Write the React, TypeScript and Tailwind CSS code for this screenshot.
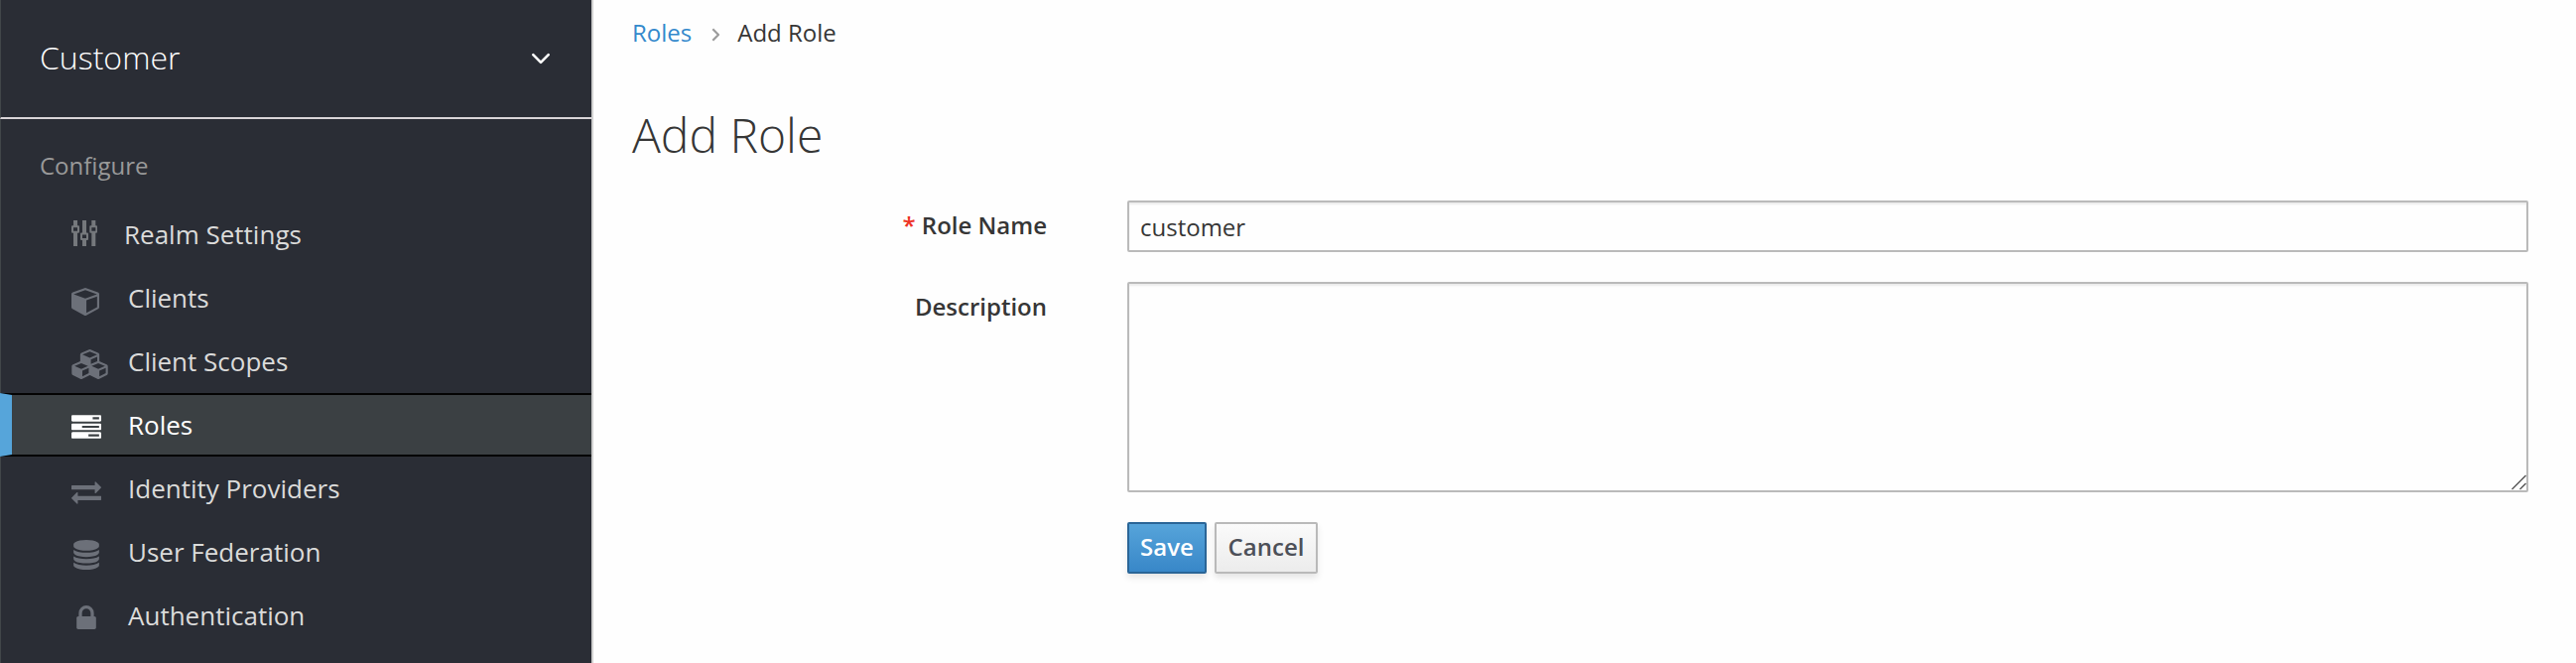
import React from "react";

type IconProps = { box: string; d: string; className: string };

function Glyph({ box, d, className }: IconProps) {
  return (
    <svg viewBox={box} className={className} fill="currentColor" aria-hidden="true">
      <path d={d} fillRule="nonzero" />
    </svg>
  );
}

function SlidersIcon() {
  return (
    <svg viewBox="0 0 26 26" className="mt-[18px] h-[26px] w-[26px] text-[#75787c]" fill="currentColor" aria-hidden="true">
      <path
        fillRule="evenodd"
        d="M2 0h4v5.300h1a1 1 0 0 1 1 1v5.400a1 1 0 0 1-1 1H6V26H2V12.700H1a1 1 0 0 1-1-1V6.300a1 1 0 0 1 1-1h1zM2 7.300v3.400h4V7.300z"
      />
      <path
        fillRule="evenodd"
        d="M11 0h4v12.500h1a1 1 0 0 1 1 1v5.400a1 1 0 0 1-1 1h-1V26h-4v-6.100h-1a1 1 0 0 1-1-1v-5.400a1 1 0 0 1 1-1h1zM11 14.500v3.400h4v-3.400z"
      />
      <path
        fillRule="evenodd"
        d="M20.300 0h4v5.300h.7a1 1 0 0 1 1 1v5.400a1 1 0 0 1-1 1h-.7V26h-4V12.700h-1a1 1 0 0 1-1-1V6.300a1 1 0 0 1 1-1h1zM20.300 7.300v3.400h4V7.300z"
      />
    </svg>
  );
}

const cube =
  "M896 1629l640-349v-636l-640 233v752zm-64-865l698-254-698-254-698 254zm832-252v768q0 35-18 65t-49 47l-704 384q-28 16-61 16t-61-16l-704-384q-31-17-49-47t-18-65v-768q0-40 23-73t61-47l704-256q22-8 44-8t44 8l704 256q38 14 61 47t23 73z";
const cubes =
  "M640 1632l384-192v-314l-384 164v342zm-64-454l404-173-404-173-404 173zm1088 454l384-192v-314l-384 164v342zm-64-454l404-173-404-173-404 173zm-448-293l384-165v-266l-384 164v267zm-64-379l441-189-441-189-441 189zm1088 518v416q0 36-19 67t-52 47l-448 224q-25 14-57 14t-57-14l-448-224q-4-2-7-4-2 2-7 4l-448 224q-25 14-57 14t-57-14l-448-224q-33-16-52-47t-19-67v-416q0-38 21.500-70t56.500-48l434-186v-400q0-38 21.500-70t56.500-48l448-192q23-10 50-10t50 10l448 192q35 16 56.500 48t21.500 70v400l434 186q36 16 57 48t21 70z";
const tasks =
  "M1024 1408h640v-128h-640v128zm-384-512h1024v-128h-1024v128zm640-512h384v-128h-384v128zm512 832v256q0 26-19 45t-45 19h-1664q-26 0-45-19t-19-45v-256q0-26 19-45t45-19h1664q26 0 45 19t19 45zm0-512v256q0 26-19 45t-45 19h-1664q-26 0-45-19t-19-45v-256q0-26 19-45t45-19h1664q26 0 45 19t19 45zm0-512v256q0 26-19 45t-45 19h-1664q-26 0-45-19t-19-45v-256q0-26 19-45t45-19h1664q26 0 45 19t19 45z";
const exchange =
  "M1792 1184v192q0 13-9.500 22.500t-22.500 9.500h-1376v192q0 13-9.500 22.500t-22.500 9.500q-12 0-24-10l-319-320q-9-9-9-22 0-14 9-23l320-320q9-9 23-9 13 0 22.500 9.500t9.500 22.500v192h1376q13 0 22.500 9.500t9.500 22.500zm0-544q0 14-9 23l-320 320q-9 9-23 9-13 0-22.500-9.500t-9.500-22.500v-192h-1376q-13 0-22.500-9.500t-9.500-22.500v-192q0-13 9.500-22.500t22.500-9.500h1376v-192q0-14 9-23t23-9q12 0 24 10l319 319q9 9 9 23z";
const database =
  "M896 768q237 0 443-43t325-127v170q0 69-103 128t-280 93.500-385 34.500-385-34.500-280-93.500-103-128v-170q119 84 325 127t443 43zm0 768q237 0 443-43t325-127v170q0 69-103 128t-280 93.500-385 34.500-385-34.500-280-93.500-103-128v-170q119 84 325 127t443 43zm0-384q237 0 443-43t325-127v170q0 69-103 128t-280 93.500-385 34.500-385-34.500-280-93.500-103-128v-170q119 84 325 127t443 43zm0-1152q208 0 385 34.500t280 93.500 103 128v128q0 69-103 128t-280 93.500-385 34.500-385-34.500-280-93.500-103-128v-128q0-69 103-128t280-93.500 385-34.500z";
const lock =
  "M640 768h512v-192q0-106-75-181t-181-75-181 75-75 181v192zm832 96v576q0 40-28 68t-68 28h-960q-40 0-68-28t-28-68v-576q0-40 28-68t68-28h32v-192q0-184 132-316t316-132 316 132 132 316v192h32q40 0 68 28t28 68z";

type Item = { label: string; icon: React.ReactNode; pad: string; active?: boolean };

const items: Item[] = [
  { label: "Realm Settings", pad: "w-[53px]", icon: <SlidersIcon /> },
  { label: "Clients", pad: "w-[57px]", icon: <Glyph box="0 128 1664 1664" d={cube} className="mt-[22px] h-[28px] w-[28px]" /> },
  { label: "Client Scopes", pad: "w-[57px]", icon: <Glyph box="0 0 2176 1792" d={cubes} className="mt-[20px] h-[30px] w-[37px]" /> },
  { label: "Roles", pad: "w-[57px]", active: true, icon: <Glyph box="0 128 1792 1408" d={tasks} className="mt-[20px] h-[24px] w-[30px]" /> },
  { label: "Identity Providers", pad: "w-[57px]", icon: <Glyph box="0 288 1792 1344" d={exchange} className="mt-[25px] h-[23px] w-[30px]" /> },
  { label: "User Federation", pad: "w-[57px]", icon: <Glyph box="128 0 1536 1792" d={database} className="ml-[2px] mt-[20px] h-[30px] w-[26px]" /> },
  { label: "Authentication", pad: "w-[57px]", icon: <Glyph box="320 128 1152 1408" d={lock} className="ml-[5px] mt-[22px] h-[24px] w-[20px]" /> },
];

function NavItem({ label, icon, pad, active }: Item) {
  return (
    <li
      className={
        active
          ? "flex h-16 border-y-2 border-l-12 border-y-[#030303] border-l-[#56a5da] bg-[#3b4043] pl-[60px] text-white"
          : "flex h-16 border-l border-[#414649] pl-[71px] text-[#dbdbda]"
      }
    >
      <span className={active ? "flex shrink-0" : "flex shrink-0 text-[#6c7079]"}>
        <span className={`${pad} flex items-start`}>{icon}</span>
      </span>
      <span className={active ? "pt-[12px] text-[26px] leading-[36px]" : "pt-[14px] text-[26px] leading-[36px]"}>{label}</span>
    </li>
  );
}

function Sidebar() {
  return (
    <aside className="flex h-full w-[598px] shrink-0 flex-col overflow-hidden border-r-2 border-[#d1d1d1] bg-[#2a2d35]">
      <div className="flex h-[120px] shrink-0 items-start justify-between border-b-2 border-l border-b-[#d9d4d8] border-l-[#414649] pr-[41px] pl-[39px] text-white">
        <span className="pt-[36px] text-[32px] leading-[43px] font-light">Customer</span>
        <svg viewBox="0 0 20 14" className="mt-[52px] h-[14px] w-[20px]" fill="none" stroke="currentColor" strokeWidth="2.600" strokeLinecap="round" strokeLinejoin="round">
          <path d="M2.300 3.200 10 10.900 17.700 3.200" />
        </svg>
      </div>
      <h2 className="h-[84px] shrink-0 border-l border-[#414649] pt-[30px] pl-[39px] text-[24px] leading-[33px] text-[#999999]">Configure</h2>
      <ul>
        {items.map((item) => (
          <NavItem key={item.label} {...item} />
        ))}
      </ul>
      <div className="flex-1 border-l border-[#414649]" />
    </aside>
  );
}

export default function App() {
  return (
    <div className="flex h-[668px] w-[2596px] overflow-hidden bg-[#fefefe] font-['Open_Sans',sans-serif] text-[24px] leading-[33px] text-[#363636]">
      <Sidebar />
      <main className="flex-1 pr-[48px] pl-[39px]">
        <nav className="flex h-[53px] items-start pt-[16px]">
          <a className="text-[#3389cc]">Roles</a>
          <svg viewBox="0 0 8 14" className="mt-[12px] mr-[18px] ml-[20px] h-[14px] w-[8px] text-[#9c9c9c]" fill="none" stroke="currentColor" strokeWidth="2.200">
            <path d="M1.300 1.300 7 7 1.300 12.700" />
          </svg>
          <span>Add Role</span>
        </nav>
        <h1 className="mt-[54px] h-[95px] text-[48px] leading-[57px] font-light">Add Role</h1>
        <form className="grid grid-cols-[418px_1412px] gap-x-[81px]">
          <label className="pt-[8px] text-right font-semibold">
            <span className="text-[#ee3224]">*</span> Role Name
          </label>
          <input
            defaultValue="customer"
            className="h-[52px] w-full rounded-[2px] border-2 border-[#bababa] bg-transparent px-[11px] pt-px shadow-[inset_0_2px_2px_rgba(3,3,3,0.075)] outline-none"
          />
          <label className="pt-[38px] text-right font-semibold">Description</label>
          <div className="relative mt-[30px] h-[212px] rounded-[2px] border-2 border-[#bababa] shadow-[inset_0_2px_2px_rgba(3,3,3,0.075)]">
            <svg viewBox="0 0 16 16" className="absolute right-0 bottom-0 h-4 w-4" fill="none" stroke="#555555" strokeWidth="1.400">
              <path d="M1.500 15 15.500 1M9.500 15l6-6" />
            </svg>
          </div>
          <div className="col-start-2 mt-[30px] flex gap-2 font-semibold">
            <button
              type="button"
              className="h-[52px] w-[80px] rounded-[2px] border-2 border-[#2a6597] bg-gradient-to-b from-[#56a4da] to-[#3887c8] pb-[3px] text-white shadow-[0_4px_6px_rgba(3,3,3,0.1)]"
            >
              Save
            </button>
            <button
              type="button"
              className="h-[52px] w-[104px] rounded-[2px] border-2 border-[#b9b9b9] bg-gradient-to-b from-[#fafafa] to-[#ececec] pb-[3px] text-[#4d5058] shadow-[0_4px_6px_rgba(3,3,3,0.1)]"
            >
              Cancel
            </button>
          </div>
        </form>
      </main>
    </div>
  );
}
